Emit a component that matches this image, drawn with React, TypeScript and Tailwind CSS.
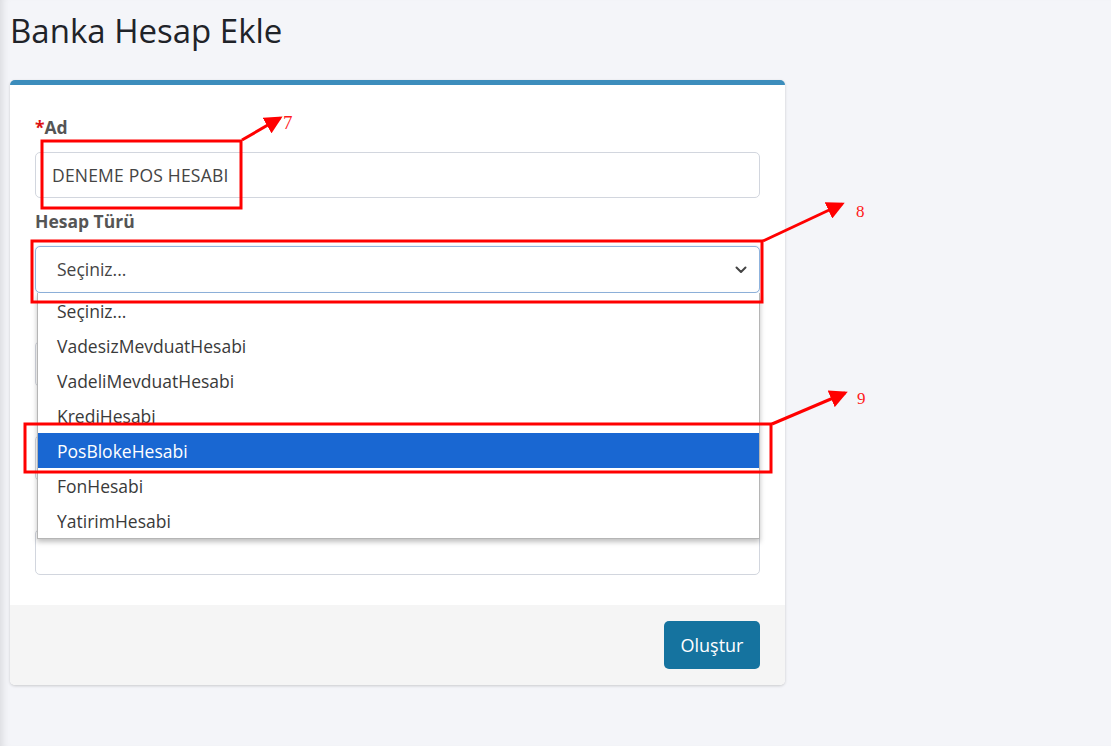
import React from "react";

const options = [
  "Seçiniz...",
  "VadesizMevduatHesabi",
  "VadeliMevduatHesabi",
  "KrediHesabi",
  "PosBlokeHesabi",
  "FonHesabi",
  "YatirimHesabi",
];

function Label({ children }: { children?: React.ReactNode }) {
  return (
    <div className="h-[24px] leading-[24px] text-[17.5px] font-bold text-[#555555]">{children}</div>
  );
}

function Input({ value }: { value?: string }) {
  return (
    <div className="mt-[13px] h-[46px] rounded-[5px] border border-[#d2d6de] bg-white pl-[16px] flex items-center text-[17.5px] tracking-[0.2px] text-[#444]">
      {value}
    </div>
  );
}

export default function App() {
  return (
    <div
      className="relative min-h-screen w-full overflow-hidden bg-[#f4f5f9] shadow-[inset_9px_0_8px_-7px_rgba(0,0,0,0.12)]"
      style={{ fontFamily: '"Source Sans Pro", "Open Sans", Lato, sans-serif' }}
    >
      <div className="pl-[10px] pt-[10px]">
        <h1 className="text-[33px] leading-[41px] text-[#1f2329] font-normal">Banka Hesap Ekle</h1>
        <div className="mt-[29px] w-[775px] rounded-[5px] border-t-[5px] border-[#3c8dbc] bg-white shadow-[0_1px_3px_rgba(0,0,0,0.18)] overflow-visible">
          <div className="px-[25px] pt-[30px] pb-[30px]">
            <div className="mb-[11px]">
              <Label>
                <span className="text-[#dd1111]">*</span>Ad
              </Label>
              <Input value="DENEME POS HESABI" />
            </div>
            <div className="mb-[11px] relative">
              <Label>Hesap Türü</Label>
              <div className="mt-[13px] h-[47px] rounded-[5px] border border-[#8fb3dd] bg-white pl-[21px] pr-[12px] flex items-center justify-between text-[17.5px] text-[#444] shadow-[0_0_2px_rgba(100,150,210,0.35)]">
                <span>Seçiniz...</span>
                <svg width="12" height="8" viewBox="0 0 12 8">
                  <path d="M1.5 1.5 L6 6 L10.5 1.5" fill="none" stroke="#444" strokeWidth="2" strokeLinecap="round" strokeLinejoin="round" />
                </svg>
              </div>
              <div className="absolute left-[2px] right-0 top-[84px] z-10 bg-white border border-[#b5b5b5] border-t-0 shadow-[0_3px_5px_rgba(0,0,0,0.25)]">
                {options.map((o) => (
                  <div
                    key={o}
                    className={
                      o === "PosBlokeHesabi"
                        ? "h-[35px] leading-[37px] pl-[19px] text-[17.5px] bg-[#1967d2] text-white"
                        : "h-[35px] leading-[37px] pl-[19px] text-[17.5px] text-[#3a3a3a]"
                    }
                  >
                    {o}
                  </div>
                ))}
              </div>
            </div>
            <div className="mb-[11px]">
              <Label />
              <Input />
            </div>
            <div className="mb-[11px]">
              <Label />
              <Input />
            </div>
            <div>
              <Label />
              <Input />
            </div>
          </div>
          <div className="h-[80px] rounded-b-[5px] bg-[#f5f5f5] flex items-center justify-end px-[25px]">
            <button className="h-[48px] w-[96px] rounded-[5px] bg-[#15739f] text-white text-[18px]">Oluştur</button>
          </div>
        </div>
      </div>

      <svg className="pointer-events-none absolute left-0 top-0 z-20" width="1111" height="746" viewBox="0 0 1111 746">
        <defs>
          <marker id="ah" markerWidth="6" markerHeight="6" refX="5" refY="3" orient="auto" markerUnits="strokeWidth">
            <path d="M0 0 L6 3 L0 6 Z" fill="#ff0000" />
          </marker>
        </defs>
        <rect x="42" y="141" width="199" height="67" fill="none" stroke="#ff0000" strokeWidth="3" />
        <line x1="242" y1="140" x2="280" y2="118" stroke="#ff0000" strokeWidth="3" markerEnd="url(#ah)" />
        <rect x="32" y="241" width="730" height="61" fill="none" stroke="#ff0000" strokeWidth="3" />
        <line x1="763" y1="241" x2="842" y2="204" stroke="#ff0000" strokeWidth="3" markerEnd="url(#ah)" />
        <rect x="25" y="424" width="746" height="48" fill="none" stroke="#ff0000" strokeWidth="3" />
        <line x1="772" y1="424" x2="845" y2="393" stroke="#ff0000" strokeWidth="3" markerEnd="url(#ah)" />
      </svg>
      <span className="absolute left-[283px] top-[112px] z-30 text-[19px] leading-[22px] text-[#ff1a1a]" style={{ fontFamily: '"Liberation Serif", serif' }}>7</span>
      <span className="absolute left-[856px] top-[201px] z-30 text-[17px] leading-[22px] text-[#ff1a1a]" style={{ fontFamily: '"Liberation Serif", serif' }}>8</span>
      <span className="absolute left-[857px] top-[388px] z-30 text-[17px] leading-[22px] text-[#ff1a1a]" style={{ fontFamily: '"Liberation Serif", serif' }}>9</span>
    </div>
  );
}
